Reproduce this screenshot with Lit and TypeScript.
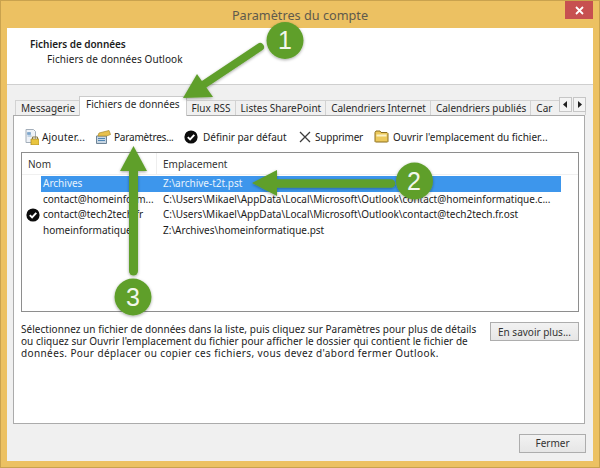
import { LitElement, html, css, svg } from "lit";
import { customElement } from "lit/decorators.js";

const checkIcon = html`<svg class="ic" width="14" height="14" viewBox="0 0 14 14"><circle cx="7" cy="7" r="6.6" fill="#0c0c0c"/><path d="M3.8 7.2l2.3 2.3 4.2-4.6" fill="none" stroke="#fff" stroke-width="1.9"/></svg>`;

const tabs = ["Messagerie", "Fichiers de données", "Flux RSS", "Listes SharePoint", "Calendriers Internet", "Calendriers publiés", "Car"];

const rows = [
  { n: "Archives", p: "Z:\\archive-t2t.pst", sel: true, chk: false },
  { n: "contact@homeinform...", p: "C:\\Users\\Mikael\\AppData\\Local\\Microsoft\\Outlook\\contact@homeinformatique.c...", sel: false, chk: false },
  { n: "contact@tech2tech.fr", p: "C:\\Users\\Mikael\\AppData\\Local\\Microsoft\\Outlook\\contact@tech2tech.fr.ost", sel: false, chk: true },
  { n: "homeinformatique", p: "Z:\\Archives\\homeinformatique.pst", sel: false, chk: false },
];

@customElement("app-root")
export class AppRoot extends LitElement {
  static styles = css`
    :host {
      display: block; width: 600px; height: 468px; position: relative; overflow: hidden;
      font-family: "Noto Sans", "Open Sans", sans-serif; font-size: 10px; color: #1c1c1c;
    }
    .win { width: 600px; height: 468px; box-sizing: border-box; background: #ecc162; padding: 0 6px 6px; display: flex; flex-direction: column; border: 1px solid #c9a24e; }
    .title { height: 27px; flex: none; display: flex; justify-content: center; align-items: center; font-size: 12.7px; color: #5f5a4c; position: relative; padding-top: 1px; box-sizing: border-box; }
    .close { position: absolute; right: 0; top: 0; width: 28px; height: 18px; background: #c75050; color: #fff; display: flex; align-items: center; justify-content: center; }
    .body { flex: 1; background: #f0f0f0; display: flex; flex-direction: column; min-height: 0; }
    .head { height: 57px; flex: none; box-sizing: border-box; background: #fff; border-bottom: 1px solid #cfcfcf; padding: 9px 0 0 23px; line-height: 15px; }
    .head b { font-weight: 600; display: block; letter-spacing: -0.05px; }
    .head span { display: block; margin-left: 17px; letter-spacing: .07px; }
    .tabs { height: 20px; margin: 11px 7px -1px 8px; flex: none; display: flex; align-items: flex-end; position: relative; z-index: 1; overflow: hidden; }
    .tab { height: 15px; box-sizing: border-box; padding: 0 4px 0 5px; border: 1px solid #d2d2d2; border-bottom: none; margin: 0 0 1px -1px; background: #f0f0f0; white-space: nowrap; line-height: 14px; flex: none; color: #2a2a2a; }
    .tab:first-child { margin-left: 0; }
    .tab.on { height: 20px; background: #fff; padding: 0 6px; line-height: 15px; margin-bottom: 0; position: relative; z-index: 1; border-color: #cbcbcb; }
    .tab.last { flex: 1; }
    .scrolls { position: absolute; right: 0; top: 1px; display: flex; gap: 1px; background: #f0f0f0; }
    .scrolls i { width: 13px; height: 15px; box-sizing: border-box; border: 1px solid #c6c6c6; background: #f4f4f4; display: flex; align-items: center; justify-content: center; }
    .panel { height: 309px; flex: none; margin: 0 8px 0 6px; box-sizing: border-box; background: #fff; border: 1px solid #ababab; padding: 0 5px 0 7px; display: flex; flex-direction: column; }
    .bar { height: 36px; flex: none; display: flex; align-items: center; padding: 5px 0 0 4px; box-sizing: border-box; }
    .btn { display: flex; align-items: center; white-space: nowrap; }
    .btn svg { margin-right: 3px; flex: none; }
    .b1 { width: 70px; } .b2 { width: 89px; } .b3 { width: 115px; } .b4 { width: 75px; }
    .b2 .t { letter-spacing: -.2px; }
    .b1 .t { letter-spacing: .2px; }
    .b3 .t { margin-left: 2px; }
    .b4 .t { margin-left: 1px; letter-spacing: -.2px; }
    .b5 .t { margin-left: 1px; }
    .list { height: 160px; flex: none; box-sizing: border-box; border: 1px solid #8e8e8e; background: #fff; }
    .cols { height: 21px; display: grid; grid-template-columns: 135px 1fr; align-items: center; border-bottom: 1px solid #f0f0f0; margin-bottom: 1px; color: #333; }
    .cols span { padding-left: 6px; height: 100%; display: flex; align-items: center; box-sizing: border-box; }
    .cols span:first-child { border-right: 1px solid #eee; }
    .row { height: 15.5px; display: grid; grid-template-columns: 120px 1fr; margin-left: 19px; margin-right: 17px; align-items: center; white-space: nowrap; position: relative; padding-left: 2px; line-height: 15px; }
    .row.sel { background: #3d96ec; color: #e8f3fc; }
    .row .ic { position: absolute; left: -15px; top: 1px; }
    .foot { display: flex; justify-content: space-between; align-items: flex-start; margin-top: 10px; }
    .foot p { margin: 0; width: 462px; line-height: 12px; color: #222; padding-top: 1px; white-space: nowrap; }
    .foot p span { display: block; }
    .l1 { letter-spacing: .04px; }
    .l2 { letter-spacing: .04px; }
    .l3 { letter-spacing: .39px; }
    .push { box-sizing: border-box; border: 1px solid #adadad; background: linear-gradient(#f2f2f2, #e6e6e6); display: flex; align-items: center; justify-content: center; color: #333; }
    .more { width: 89px; height: 19px; }
    .end { flex: 1; display: flex; justify-content: flex-end; align-items: center; padding: 1px 7px 0 0; }
    .close-btn { width: 67px; height: 19px; }
    .over { position: absolute; left: 0; top: 0; pointer-events: none; z-index: 5; }
    .num { font: 25px "Liberation Sans", sans-serif; fill: #f2f7ec; text-anchor: middle; }
  `;

  private overlay() {
    const g = "#5f9f2c";
    return html`<svg class="over" width="600" height="468" viewBox="0 0 600 468">
      <defs><filter id="s" x="-20%" y="-20%" width="140%" height="140%"><feDropShadow dx="0" dy="1" stdDeviation="1.5" flood-color="#000" flood-opacity=".35"/></filter></defs>
      <g filter="url(#s)">
        ${svg`
        <path d="M260 47L203 85" stroke="${g}" stroke-width="8" stroke-linecap="round"/>
        <path d="M183 98L197 74L213 97Z" fill="${g}"/>
        <circle cx="285" cy="40.500" r="18.500" fill="${g}"/>
        <path d="M391 183.500H272" stroke="${g}" stroke-width="8.500" stroke-linecap="round"/>
        <path d="M252 183L277 170V196Z" fill="${g}"/>
        <circle cx="414.500" cy="181" r="18.500" fill="${g}"/>
        <path d="M133.500 271V165" stroke="${g}" stroke-width="9" stroke-linecap="round"/>
        <path d="M133.500 146L147 171H120Z" fill="${g}"/>
        <circle cx="133" cy="297" r="18.500" fill="${g}"/>
        `}
      </g>
      <text class="num" x="285" y="49">1</text>
      <text class="num" x="414" y="190">2</text>
      <text class="num" x="133" y="306">3</text>
    </svg>`;
  }

  render() {
    return html`
      <div class="win">
        <div class="title">Paramètres du compte
          <div class="close"><svg width="9" height="9" viewBox="0 0 9 9"><path d="M1 1l7 7M8 1l-7 7" stroke="#fff" stroke-width="1.8"/></svg></div>
        </div>
        <div class="body">
          <div class="head"><b>Fichiers de données</b><span>Fichiers de données Outlook</span></div>
          <div class="tabs">
            ${tabs.map((t, i) => html`<div class="tab ${i === 1 ? "on" : ""} ${i === 6 ? "last" : ""}">${t}</div>`)}
            <div class="scrolls">
              <i><svg width="5" height="7" viewBox="0 0 5 7"><path d="M4 0v7L0 3.500Z" fill="#222"/></svg></i>
              <i><svg width="5" height="7" viewBox="0 0 5 7"><path d="M1 0v7l4-3.500Z" fill="#222"/></svg></i>
            </div>
          </div>
          <div class="panel">
            <div class="bar">
              <div class="btn b1">
                <svg width="14" height="16" viewBox="0 0 14 16"><path d="M1 .5h7.500l2 2v11H1Z" fill="#eef2f7" stroke="#a3aeba"/><path d="M2.500 3.500h3v2h-3ZM2.500 7h4" fill="#7fa6cc" stroke="#7fa6cc" stroke-width=".8"/><path d="M6 10h8v6H6Z" fill="#e9c53f" stroke="#a98a2b" stroke-width=".8"/><path d="M7.500 10V8h5v2" fill="none" stroke="#8a7a45"/></svg>
                <span class="t">Ajouter...</span></div>
              <div class="btn b2">
                <svg width="16" height="14" viewBox="0 0 16 14"><path d="M1.500 6h10v7.500h-10Z" fill="#c8d6e3" stroke="#6f8496"/><path d="M3 5.500L4 3l10-2.500 1.500 4-4 1.500H3Z" fill="#e7c04e" stroke="#a98a2b" stroke-width=".7"/><path d="M3 8.500h7M3 10.500h7" stroke="#4f86b5"/></svg>
                <span class="t">Paramètres...</span></div>
              <div class="btn b3">${checkIcon}<span class="t">Définir par défaut</span></div>
              <div class="btn b4">
                <svg width="12" height="12" viewBox="0 0 12 12"><path d="M1 1l10 10M11 1L1 11" stroke="#3c3c3c" stroke-width="1.300"/></svg>
                <span class="t">Supprimer</span></div>
              <div class="btn b5">
                <svg width="15" height="13" viewBox="0 0 15 13"><path d="M1 11.500V2.500l1-1.500h4l1 1.500h6l1 1v8l-.5.500H1.500Z" fill="#ecc95c" stroke="#8c6f1f"/><path d="M2.500 4.500h10v2h-10Z" fill="#fbf2c8"/></svg>
                <span class="t">Ouvrir l'emplacement du fichier...</span></div>
            </div>
            <div class="list">
              <div class="cols"><span>Nom</span><span>Emplacement</span></div>
              ${rows.map((r) => html`<div class="row ${r.sel ? "sel" : ""}">${r.chk ? checkIcon : ""}<span>${r.n}</span><span>${r.p}</span></div>`)}
            </div>
            <div class="foot">
              <p>
                <span class="l1">Sélectionnez un fichier de données dans la liste, puis cliquez sur Paramètres pour plus de détails</span>
                <span class="l2">ou cliquez sur Ouvrir l'emplacement du fichier pour afficher le dossier qui contient le fichier de</span>
                <span class="l3">données. Pour déplacer ou copier ces fichiers, vous devez d'abord fermer Outlook.</span>
              </p>
              <div class="push more">En savoir plus...</div>
            </div>
          </div>
          <div class="end"><div class="push close-btn">Fermer</div></div>
        </div>
      </div>
      ${this.overlay()}
    `;
  }
}
